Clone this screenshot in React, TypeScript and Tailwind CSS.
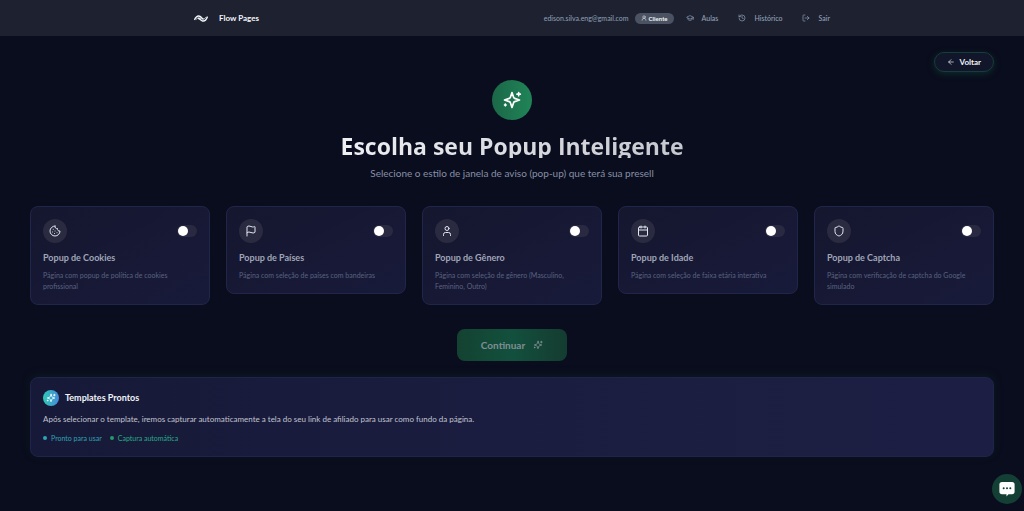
import { useState } from "react";
import {
  ArrowLeft,
  Calendar,
  Cookie,
  Flag,
  GraduationCap,
  History,
  LogOut,
  Shield,
  User,
  UserRound,
  type LucideIcon,
} from "lucide-react";

type Popup = {
  id: string;
  name: string;
  description: string;
  icon: LucideIcon;
};

const popups: Popup[] = [
  {
    id: "cookies",
    name: "Popup de Cookies",
    description: "Página com popup de política de cookies profissional",
    icon: Cookie,
  },
  {
    id: "paises",
    name: "Popup de Países",
    description: "Página com seleção de países com bandeiras",
    icon: Flag,
  },
  {
    id: "genero",
    name: "Popup de Gênero",
    description: "Página com seleção de gênero (Masculino, Feminino, Outro)",
    icon: User,
  },
  {
    id: "idade",
    name: "Popup de Idade",
    description: "Página com seleção de faixa etária interativa",
    icon: Calendar,
  },
  {
    id: "captcha",
    name: "Popup de Captcha",
    description: "Página com verificação de captcha do Google simulado",
    icon: Shield,
  },
];

const links = [
  { label: "Aulas", icon: GraduationCap },
  { label: "Histórico", icon: History },
  { label: "Sair", icon: LogOut },
];

const Logo = () => (
  <svg viewBox="0 0 28 14" className="h-[7px] w-3.5" fill="none" stroke="#f1f5f9" strokeWidth="2.800">
    <path d="M1 10C3 4 7 1 11 2.500c4 1.500 5 5 8 5" />
    <path d="M8 7c3-1 5 4 9 5 5 1 8-3 10-9" />
    <path d="M4 9c3-4 7-4 10-1M14 7c4 3 7 1 10-3" strokeWidth="1.500" />
  </svg>
);

const Sparkles = ({ className }: { className: string }) => (
  <svg
    viewBox="0 0 24 24"
    className={className}
    fill="none"
    stroke="currentColor"
    strokeWidth="2"
    strokeLinecap="round"
    strokeLinejoin="round"
  >
    <path d="m12 3-1.900 5.800a2 2 0 0 1-1.300 1.300L3 12l5.800 1.900a2 2 0 0 1 1.300 1.300L12 21l1.900-5.800a2 2 0 0 1 1.300-1.300L21 12l-5.800-1.900a2 2 0 0 1-1.300-1.300Z" />
    <path d="M4 17v2M5 18H3M20 3v4M22 5h-4" />
  </svg>
);

const Header = () => (
  <header className="bg-[#1e2130]">
    <div className="mx-auto flex h-9 max-w-[636px] items-center justify-between">
      <a href="#" className="flex items-center gap-[11px] text-[8px] font-bold text-slate-100">
        <Logo />
        Flow Pages
      </a>
      <nav className="flex items-center text-[7px] text-slate-400">
        <span>edison.silva.eng@gmail.com</span>
        <span className="ml-1.5 flex h-[11px] items-center gap-0.5 rounded-full bg-[#4b5262] px-1.5 text-[6px] font-bold text-slate-100">
          <UserRound className="size-1.5" />
          Cliente
        </span>
        <div className="ml-3 flex items-center gap-5">
          {links.map(({ label, icon: Icon }) => (
            <a key={label} href="#" className="flex items-center gap-2 font-medium">
              <Icon className="size-2" />
              {label}
            </a>
          ))}
        </div>
      </nav>
    </div>
  </header>
);

const PopupCard = ({
  popup,
  checked,
  onChange,
}: {
  popup: Popup;
  checked: boolean;
  onChange: () => void;
}) => {
  const Icon = popup.icon;
  return (
    <div className="rounded-lg border border-[#22254a] bg-linear-to-br from-[#15172f] to-[#181a3a] p-3">
      <div className="flex items-center justify-between">
        <div className="flex size-6 items-center justify-center rounded-full bg-[#2a2b41]">
          <Icon className="size-3 text-slate-200" />
        </div>
        <input
          id={popup.id}
          type="checkbox"
          checked={checked}
          onChange={onChange}
          className="peer sr-only"
        />
        <label
          htmlFor={popup.id}
          aria-label={popup.name}
          className="flex h-3 w-5 cursor-pointer items-center rounded-full bg-[#292a41] px-px peer-checked:justify-end peer-checked:bg-emerald-700"
        >
          <span className="size-2.5 rounded-full bg-white" />
        </label>
      </div>
      <h3 className="mt-2 text-[9px] leading-[14px] font-bold text-[#a0a6b8]">{popup.name}</h3>
      <p className="mt-[5px] text-[7px] leading-[11px] text-[#5a6380]">{popup.description}</p>
    </div>
  );
};

const App = () => {
  const [selected, setSelected] = useState<string | null>(null);

  return (
    <div className="min-h-screen bg-[#0a0d1d] font-['Lato','Open_Sans',sans-serif]">
      <Header />
      <main className="px-[30px] pt-4 pb-8">
        <div className="flex justify-end">
          <button className="flex h-5 items-center gap-1 rounded-full border border-[#173c3b] bg-[#11162a] px-3 text-[8px] font-bold text-slate-100 shadow-[0_2px_6px_#0f4a3a80]">
            <ArrowLeft className="size-2" />
            Voltar
          </button>
        </div>

        <div className="mt-2 flex flex-col items-center">
          <div className="flex size-10 items-center justify-center rounded-full bg-linear-to-r from-[#1b6848] to-[#208457]">
            <Sparkles className="size-5 text-white" />
          </div>
          <h1 className="mt-3.5 bg-linear-to-r from-[#eef0f3] to-[#c6c8cf] bg-clip-text font-['Open_Sans'] text-[23px] leading-6 font-bold text-transparent">
            Escolha seu Popup Inteligente
          </h1>
          <p className="mt-2 text-[10px] leading-[14px] text-[#8690a8]">
            Selecione o estilo de janela de aviso (pop-up) que terá sua presell
          </p>
        </div>

        <div className="mt-[26px] grid grid-cols-5 items-start gap-4">
          {popups.map((popup) => (
            <PopupCard
              key={popup.id}
              popup={popup}
              checked={selected === popup.id}
              onChange={() => setSelected(selected === popup.id ? null : popup.id)}
            />
          ))}
        </div>

        <div className="mt-6 flex justify-center">
          <button className="flex h-8 items-center gap-2 rounded-lg bg-linear-to-r from-[#144231] via-[#12503d] to-[#143c30] px-6 text-[10px] font-bold text-[#7f8f93]">
            Continuar
            <Sparkles className="size-2.5" />
          </button>
        </div>

        <section className="mt-4 rounded-lg border border-[#20234a] bg-linear-to-r from-[#171938] via-[#1b1d40] to-[#1c1f43] p-3 shadow-[0_-2px_8px_#0f2a2a66]">
          <div className="flex items-center gap-1.5">
            <div className="flex size-4 items-center justify-center rounded-full bg-linear-to-r from-[#2cc9b5] to-[#4588d8]">
              <Sparkles className="size-2.5 text-white" />
            </div>
            <h2 className="text-[9px] leading-4 font-bold text-slate-100">Templates Prontos</h2>
          </div>
          <p className="mt-1.5 text-[8px] leading-[14px] text-[#c0c4d0]">
            Após selecionar o template, iremos capturar automaticamente a tela do seu link de
            afiliado para usar como fundo da página.
          </p>
          <ul className="mt-1.5 flex gap-2 text-[7px] leading-3">
            <li className="flex items-center gap-1 text-[#2ea3b4]">
              <span className="size-1 rounded-full bg-[#2aa6b8]" />
              Pronto para usar
            </li>
            <li className="flex items-center gap-1 text-[#27ab89]">
              <span className="size-1 rounded-full bg-[#219a6c]" />
              Captura automática
            </li>
          </ul>
        </section>
      </main>

      <button
        aria-label="Chat"
        className="fixed right-0.5 bottom-[7px] flex size-[30px] items-center justify-center rounded-full bg-[#143f34]"
      >
        <svg viewBox="0 0 16 16" className="size-4">
          <path
            d="M3 1h10a2.600 2.600 0 0 1 2.600 2.600v7a2.600 2.600 0 0 1-2.600 2.600H9.500L7.500 15.500V13.200H3A2.600 2.600 0 0 1 .4 10.600v-7A2.600 2.600 0 0 1 3 1Z"
            fill="#fff"
          />
          <circle cx="4.700" cy="7.200" r="1" fill="#143f34" />
          <circle cx="8" cy="7.200" r="1" fill="#143f34" />
          <circle cx="11.300" cy="7.200" r="1" fill="#143f34" />
        </svg>
      </button>
    </div>
  );
};

export default App;
